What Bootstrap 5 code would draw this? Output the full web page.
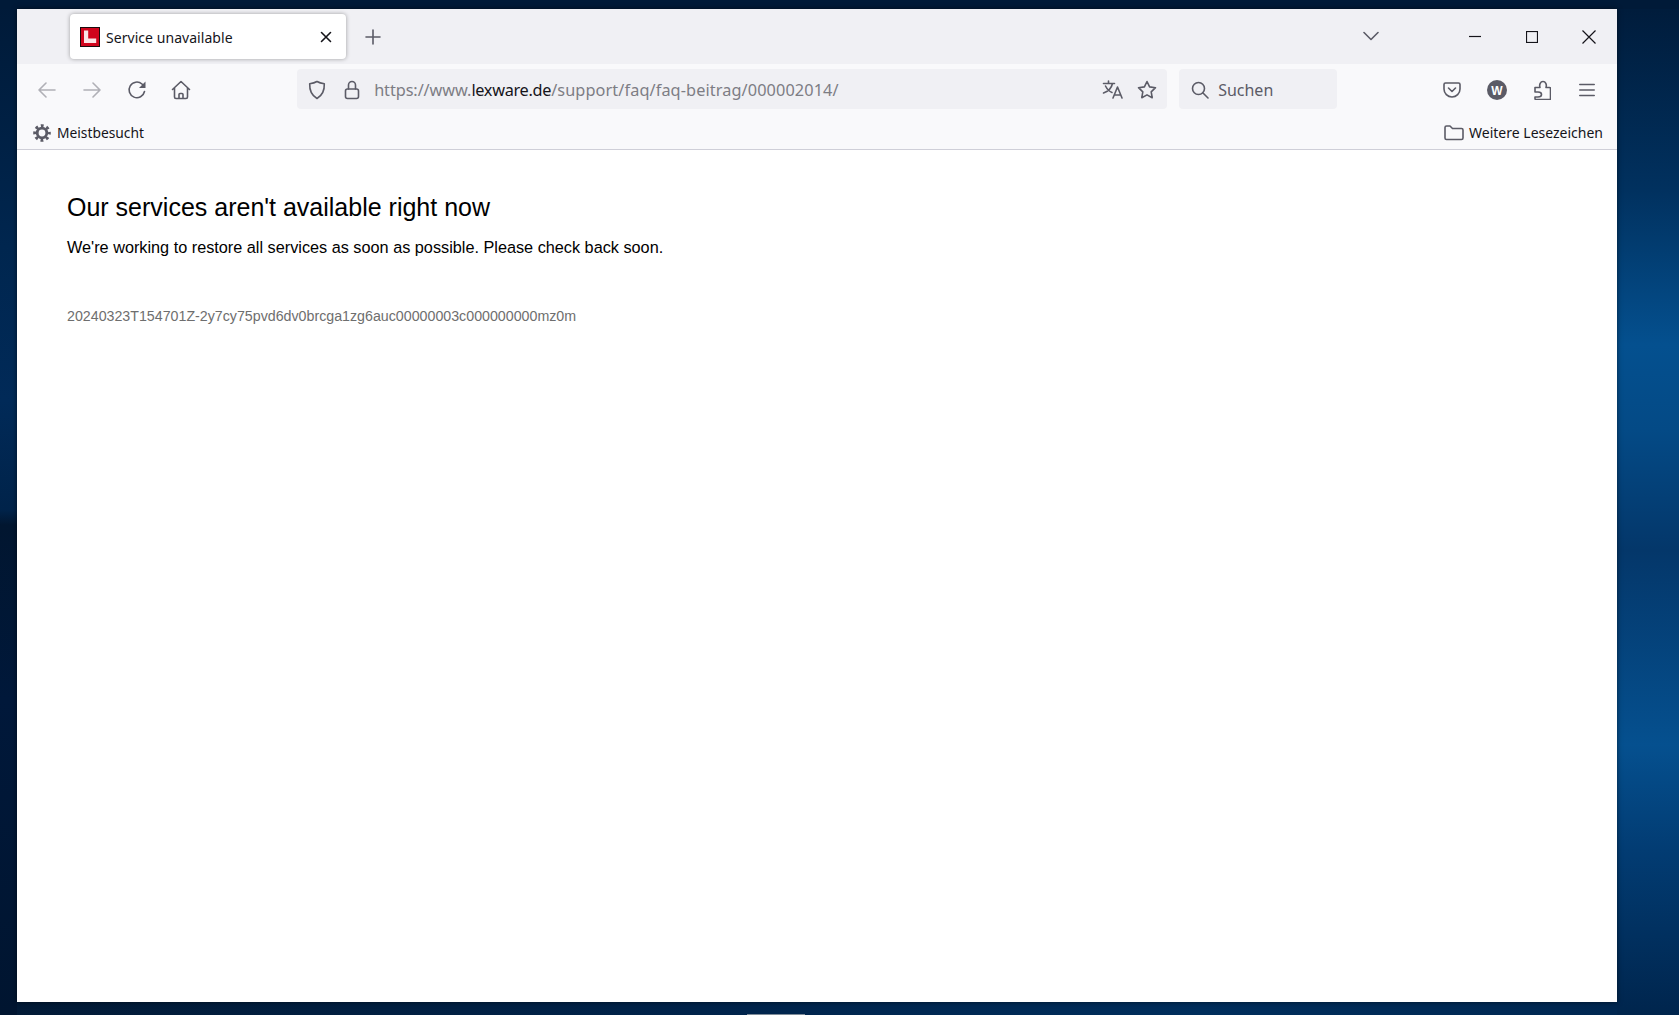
<!DOCTYPE html>
<html lang="de">
<head>
<meta charset="utf-8">
<title>Service unavailable</title>
<link href="https://cdn.jsdelivr.net/npm/bootstrap@5.3.0/dist/css/bootstrap.min.css" rel="stylesheet">
<style>
html,body{height:100%;}
body{margin:0;overflow:hidden;padding:9px 62px 13px 17px;position:relative;
 background-color:#001a38;
 background-image:
  linear-gradient(90deg,#001a38 0,#001a38 1679px),
  linear-gradient(180deg,#001b3a 0,#01315f 190px,#04508f 345px,#044a86 430px,#04376a 550px,#05508f 745px,#023c73 850px,#00254d 1015px),
  linear-gradient(180deg,#001a38 0,#00264f 246px,#012a58 400px,#00234a 510px,#011630 525px,#00183a 700px,#001530 1015px),
  linear-gradient(90deg,#021a36 0,#00234a 700px,#002e5c 1200px,#00264f 1679px);
 background-size:100% 9px,62px 100%,17px 100%,100% 100%;
 background-position:left top,right top,left top,left top;
 background-repeat:no-repeat;
 font-family:"Open Sans","Noto Sans",sans-serif;}
.win{height:100%;background:#fff;box-shadow:0 0 5px rgba(0,0,0,.55);}
.tabstrip{height:55px;background:#f0f0f4;flex:none;}
.tabitem{margin-left:53px;margin-top:5px;width:276px;height:45px;background:#fff;border-radius:4px;box-shadow:0 0 4px rgba(0,0,0,.35);padding:0 13px 0 10px;}
.tabtitle{font-size:14px;letter-spacing:.05px;color:#15141a;margin-left:6px;padding-top:2px;font-family:"Noto Sans",sans-serif;}
.favi{width:20px;height:20px;flex:none;}
.tabx{margin-left:auto;}
.plus{margin-left:16px;width:22px;}
.chev{margin-left:977px;width:20px;height:53px;}
.wctl{margin-left:auto;}
.wbtn{width:57px;}
.toolrow{height:47px;background:#f9f9fb;flex:none;padding:5px 0 0 8px;}
.tbtn{width:44.67px;height:40px;flex:none;padding-top:2px;}
.tbtn-menu{padding-left:2px;}
.urlfield{margin-left:93.5px;width:870px;height:40px;background:#f0f0f4;border-radius:4px;padding:2px 6px 0 2px;font-family:"Noto Sans",sans-serif;font-size:16.3px;flex:none;}
.urlicon{width:35px;flex:none;}
.urltext{color:#7d7d84;white-space:nowrap;margin-left:5px;letter-spacing:-.08px;}
.urlhost{color:#15141a;letter-spacing:-.3px;}
.urlpath{letter-spacing:.1px;}
.urlend{margin-left:auto;gap:9px;}
.searchfield{margin-left:12px;width:158px;height:40px;background:#f0f0f4;border-radius:4px;padding:2px 0 0 12px;font-family:"Noto Sans",sans-serif;font-size:16px;color:#5b5b66;flex:none;}
.searchfield span{margin-left:9px;}
.rightbtns{margin-left:93px;}
.bmrow{height:39px;background:#f9f9fb;border-bottom:1px solid #cfcfd8;flex:none;padding:6px 14px 0 16px;font-family:"Noto Sans",sans-serif;font-size:13.8px;color:#15141a;}
.bmrow span{margin-left:6px;}
.bmrow .bmlast{font-size:14px;margin-left:5px;padding-bottom:1px;}
.pagearea{padding:43px 50px;font-family:"Liberation Sans",Arial,sans-serif;color:#000;}
.errhead{font-size:25px;font-weight:400;line-height:29px;margin:0 0 15px;}
.errtext{font-size:16.25px;line-height:20px;margin:0 0 51px;}
.errid{font-size:14.22px;line-height:16px;color:#6e6e6e;margin:0;}
.tbar-mark{position:absolute;left:747px;bottom:0;width:58px;height:1px;background:#7f8c99;}
svg{display:block;}
.ic{fill:none;stroke:#5b5b66;stroke-width:1.6;stroke-linecap:round;stroke-linejoin:round;}
.ic-faint{stroke:#b0b0b6;}
.ic-dark{stroke:#15141a;stroke-width:1.2;stroke-linecap:butt;stroke-linejoin:miter;}
.ic-ink{stroke:#15141a;}
.ic-fillcorner{fill:#5b5b66;stroke:none;}
.starbox{width:28px;}
</style>
</head>
<body>
<div class="win d-flex flex-column">
  <div class="tabstrip d-flex align-items-start">
    <div class="tabitem d-flex align-items-center">
      <svg class="favi" viewBox="0 0 20 20"><rect width="20" height="20" fill="#1a0a0c"/><rect x="1" y="1" width="18" height="18" fill="#d0041c"/><path d="M4 3.500h4.200v8h8v4.500H4z" fill="#fbe3e5"/></svg>
      <span class="tabtitle">Service unavailable</span>
      <svg class="tabx ic ic-ink" width="14" height="14" viewBox="0 0 14 14"><path d="M2.500 2.500l9 9M11.500 2.500l-9 9"/></svg>
    </div>
    <div class="plus d-flex align-items-center justify-content-center h-100">
      <svg class="ic" width="16" height="16" viewBox="0 0 16 16"><path d="M8 1v14M1 8h14"/></svg>
    </div>
    <div class="chev d-flex align-items-center justify-content-center">
      <svg class="ic" width="16" height="10" viewBox="0 0 16 10"><path d="M1 1.500l7 7 7-7"/></svg>
    </div>
    <div class="wctl d-flex h-100">
      <div class="wbtn d-flex align-items-center justify-content-center"><svg class="ic-dark ic" width="12" height="12" viewBox="0 0 12 12"><path d="M0 5.500h12"/></svg></div>
      <div class="wbtn d-flex align-items-center justify-content-center"><svg class="ic-dark ic" width="12" height="12" viewBox="0 0 12 12"><rect x=".5" y=".5" width="11" height="11"/></svg></div>
      <div class="wbtn d-flex align-items-center justify-content-center"><svg class="ic-dark ic" width="14" height="14" viewBox="0 0 14 14"><path d="M.5.5l13 13M13.500.5l-13 13"/></svg></div>
    </div>
  </div>
  <div class="toolrow d-flex align-items-start">
    <div class="tbtn d-flex align-items-center justify-content-center"><svg class="ic ic-faint" width="18" height="16" viewBox="0 0 18 16"><path d="M1 8h16M8 1L1 8l7 7"/></svg></div>
    <div class="tbtn d-flex align-items-center justify-content-center"><svg class="ic ic-faint" width="18" height="16" viewBox="0 0 18 16"><path d="M17 8H1M10 1l7 7-7 7"/></svg></div>
    <div class="tbtn d-flex align-items-center justify-content-center"><svg class="ic" width="20" height="20" viewBox="0 0 20 20"><path d="M17.500 11.500A7.800 7.800 0 1 1 15 4l2 2.200"/><path class="ic-fillcorner" d="M18.500 1.500v6.500h-6.500z"/></svg></div>
    <div class="tbtn d-flex align-items-center justify-content-center"><svg class="ic" width="20" height="20" viewBox="0 0 20 20"><path d="M1.500 9.500L10 1.500l8.500 8M3.500 8v9a1.500 1.500 0 0 0 1.500 1.500h10a1.500 1.500 0 0 0 1.500-1.500V8M8 18.500v-4a1 1 0 0 1 1-1h2a1 1 0 0 1 1 1v4"/></svg></div>
    <div class="urlfield d-flex align-items-center">
      <div class="urlicon d-flex justify-content-center"><svg class="ic" width="18" height="20" viewBox="0 0 18 20"><path d="M9 1.500c2.500 1.600 5 2 7.300 2.200.3 6.500-1.800 11.500-7.300 14.800C3.500 15.200 1.400 10.200 1.700 3.700 4 3.500 6.500 3.100 9 1.500z"/></svg></div>
      <div class="urlicon d-flex justify-content-center"><svg class="ic" width="16" height="20" viewBox="0 0 16 20"><rect x="1.500" y="9" width="13" height="9.500" rx="2"/><path d="M4.500 9V5a3.500 3.500 0 0 1 7 0v4"/></svg></div>
      <span class="urltext">https://www.<span class="urlhost">lexware.de</span><span class="urlpath">/support/faq/faq-beitrag/000002014/</span></span>
      <div class="urlend d-flex align-items-center">
        <svg class="ic" width="22" height="20" viewBox="0 0 22 20"><path d="M1.500 3.500h11M6.500 1v2.500M10.500 3.500C9.500 8 6 11.500 1.500 13M3.500 6c1.500 3 4 5.500 6.500 6.500M11 18l4.500-11 4.500 11M12.500 15h6"/></svg>
        <div class="starbox d-flex justify-content-center"><svg class="ic" width="20" height="20" viewBox="0 0 20 20"><path d="M10 1.500l2.600 5.400 5.900.8-4.300 4.100 1 5.900L10 14.900l-5.200 2.800 1-5.900L1.500 7.700l5.900-.8z"/></svg></div>
      </div>
    </div>
    <div class="searchfield d-flex align-items-center">
      <svg class="ic" width="18" height="18" viewBox="0 0 18 18"><circle cx="7.500" cy="7.500" r="6"/><path d="M12 12l5 5"/></svg>
      <span>Suchen</span>
    </div>
    <div class="rightbtns d-flex">
      <div class="tbtn d-flex align-items-center justify-content-center"><svg class="ic" width="18" height="18" viewBox="0 0 18 18"><path d="M2.500 2h13A1.500 1.500 0 0 1 17 3.500V8A8 8 0 0 1 1 8V3.500A1.500 1.500 0 0 1 2.500 2z"/><path d="M5.500 7L9 10.500 12.500 7"/></svg></div>
      <div class="tbtn d-flex align-items-center justify-content-center"><svg width="20" height="20" viewBox="0 0 20 20"><circle cx="10" cy="10" r="10" fill="#5b5b66"/><text x="10" y="14.500" text-anchor="middle" fill="#fff" font-family="Liberation Sans,sans-serif" font-weight="700" font-size="12">W</text></svg></div>
      <div class="tbtn d-flex align-items-center justify-content-center"><svg class="ic" width="18" height="20" viewBox="0 0 18 20"><path d="M2 7.500h5c-1-3 .5-6 3-6s4 3 3 6h3.500a1 1 0 0 1 1 1v10a1 1 0 0 1-1 1H3a1 1 0 0 1-1-1V17h3c2.500 0 3.500-1.500 3.500-2.500S7.500 12 5 12H2z"/></svg></div>
      <div class="tbtn tbtn-menu d-flex align-items-center justify-content-center"><svg class="ic" width="16" height="14" viewBox="0 0 16 14"><path d="M.8 1.500h14.400M.8 7h14.400M.8 12.500h14.400"/></svg></div>
    </div>
  </div>
  <div class="bmrow d-flex align-items-center">
    <svg width="18" height="18" viewBox="0 0 18 18" fill="none" stroke="#5b5b66"><circle cx="9" cy="9" r="4.800" stroke-width="2.800"/><circle cx="9" cy="9" r="7.200" stroke-width="3.200" stroke-dasharray="2.800 2.855" stroke-dashoffset="1.400"/></svg>
    <span>Meistbesucht</span>
    <div class="ms-auto d-flex align-items-center">
      <svg class="ic" width="20" height="16" viewBox="0 0 20 16"><path d="M1 13V2.500A1.500 1.500 0 0 1 2.500 1H6l2.500 2.500h9A1.500 1.500 0 0 1 19 5v8a1.500 1.500 0 0 1-1.500 1.500h-15A1.500 1.500 0 0 1 1 13z"/></svg>
      <span class="bmlast">Weitere Lesezeichen</span>
    </div>
  </div>
  <div class="pagearea flex-grow-1">
    <h1 class="errhead">Our services aren't available right now</h1>
    <p class="errtext">We're working to restore all services as soon as possible. Please check back soon.</p>
    <p class="errid">20240323T154701Z-2y7cy75pvd6dv0brcga1zg6auc00000003c000000000mz0m</p>
  </div>
</div>
<div class="tbar-mark"></div>
</body>
</html>
